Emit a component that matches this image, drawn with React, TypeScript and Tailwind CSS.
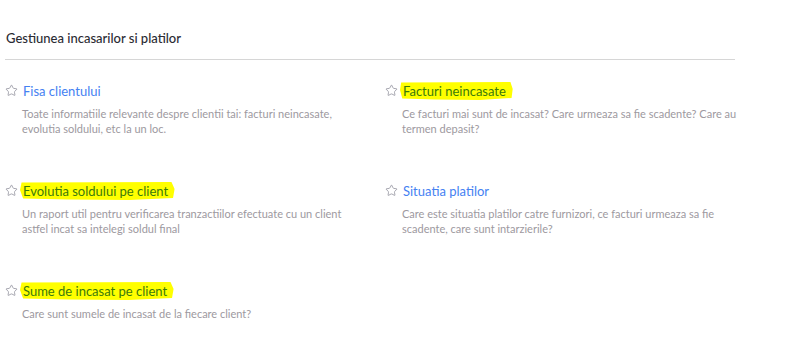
import React from 'react';
import { Star } from 'lucide-react';

type Item = { title: string; desc: string; marked?: boolean };

const items: Item[] = [
  { title: 'Fisa clientului', desc: 'Toate informatiile relevante despre clientii tai: facturi neincasate, evolutia soldului, etc la un loc.' },
  { title: 'Facturi neincasate', desc: 'Ce facturi mai sunt de incasat? Care urmeaza sa fie scadente? Care au termen depasit?', marked: true },
  { title: 'Evolutia soldului pe client', desc: 'Un raport util pentru verificarea tranzactiilor efectuate cu un client astfel incat sa intelegi soldul final', marked: true },
  { title: 'Situatia platilor', desc: 'Care este situatia platilor catre furnizori, ce facturi urmeaza sa fie scadente, care sunt intarzierile?' },
  { title: 'Sume de incasat pe client', desc: 'Care sunt sumele de incasat de la fiecare client?', marked: true },
];

// hand-drawn marker highlight behind the title
const Marker = ({ children }: { children: React.ReactNode }) => (
  <span className="relative inline-block">
    <svg className="absolute -left-[3px] -top-[2px] h-[20px] w-[calc(100%+11px)]" viewBox="0 0 100 20" preserveAspectRatio="none">
      <path d="M1 1.5 L97 1 L99 8 L98 17 L70 19 L30 18.5 L2 17.5 L0 9 Z" fill="#ffff00" />
    </svg>
    <span className="relative text-[#3b7a0c]">{children}</span>
  </span>
);

export default function App() {
  return (
    <div className="w-[794px] h-[346px] bg-white font-['Lato',sans-serif] overflow-hidden">
      <h2 className="pt-[30px] pl-[6px] text-[13px] leading-[16px] font-medium text-[#2b2b33]">
        Gestiunea incasarilor si platilor
      </h2>
      <div className="ml-[5px] mt-[13px] w-[730px] h-px bg-[#d6d6d6]" />
      <div className="ml-[5px] mt-[23px] grid grid-cols-[380px_380px] auto-rows-[100px]">
        {items.map((it) => (
          <div key={it.title}>
            <div className="flex items-center gap-[5px] text-[13px] leading-[16px] text-[#4581f2]">
              <Star size={13} strokeWidth={1.4} className="text-[#8c8c98] -mt-[2px]" />
              {it.marked ? <Marker>{it.title}</Marker> : <span>{it.title}</span>}
            </div>
            <p className="mt-[7px] ml-[17px] w-[340px] text-[11px] leading-[15px] text-[#9d99a0]">
              {it.desc}
            </p>
          </div>
        ))}
      </div>
    </div>
  );
}
